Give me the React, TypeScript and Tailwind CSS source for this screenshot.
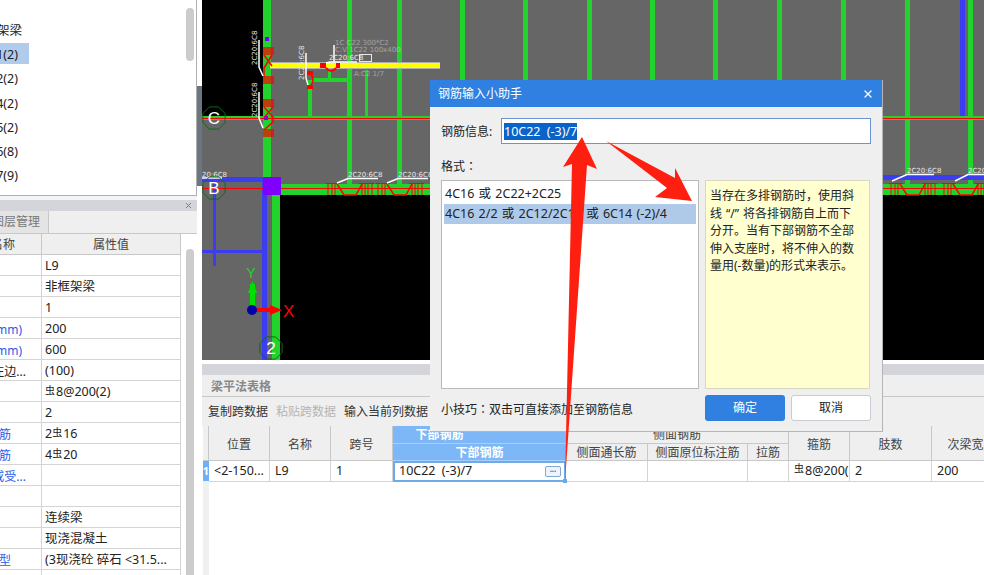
import React from 'react';
import { X } from 'lucide-react';

const TREE_ROWS = [
  { text: '非框架梁', clip: 'w-[22px]', active: false },
  { text: 'L1(2)', clip: 'w-[18px]', active: true },
  { text: 'L2(2)', clip: 'w-[18px]', active: false },
  { text: 'L4(2)', clip: 'w-[18px]', active: false },
  { text: 'L5(2)', clip: 'w-[18px]', active: false },
  { text: 'L6(8)', clip: 'w-[18px]', active: false },
  { text: 'L7(9)', clip: 'w-[18px]', active: false },
  { text: 'L8(9)', clip: 'w-[18px]', active: false },
];

const PROPS = [
  { name: '', clip: 'w-[20px]', blue: false, value: 'L9' },
  { name: '', clip: 'w-[20px]', blue: false, value: '非框架梁' },
  { name: '', clip: 'w-[20px]', blue: false, value: '1' },
  { name: '截面宽度(mm)', clip: 'w-[22px]', blue: true, value: '200' },
  { name: '截面高度(mm)', clip: 'w-[22px]', blue: true, value: '600' },
  { name: '轴线距梁左边...', clip: 'w-[26px]', blue: false, value: '(100)' },
  { name: '', clip: 'w-[20px]', blue: false, value: '@8@200(2)' },
  { name: '', clip: 'w-[20px]', blue: false, value: '2' },
  { name: '上部通长筋', clip: 'w-[11px]', blue: true, value: '2@16' },
  { name: '下部通长筋', clip: 'w-[11px]', blue: true, value: '4@20' },
  { name: '侧面构造或受...', clip: 'w-[26px]', blue: true, value: '' },
  { name: '', clip: 'w-[20px]', blue: false, value: '' },
  { name: '', clip: 'w-[20px]', blue: false, value: '连续梁' },
  { name: '', clip: 'w-[20px]', blue: false, value: '现浇混凝土' },
  { name: '混凝土类型', clip: 'w-[11px]', blue: true, value: '(3现浇砼 碎石 <31.5...' },
  { name: '', clip: 'w-[20px]', blue: false, value: '' },
];

const GREEN_COLUMNS = [347, 397, 460, 523, 587, 650, 713, 777, 841, 905, 968];
const H_MARKS = [326, 376, 889, 942];
const B_LABELS = [348, 398, 907, 968];

// rebar grade symbol, raised a little like in the app font
function Steel() {
  return <span className="relative top-[-3px] text-[10px] leading-none mr-px">虫</span>;
}

function PropValue({ value }: { value: string }) {
  if (!value.includes('@') || value[0] === '(') return <>{value}</>;
  const [before, after] = value.split('@').length === 3 ? ['', value.slice(1)] : value.split('@');
  return (
    <>
      {before}
      <Steel />
      {after}
    </>
  );
}

function HMark({ x }: { x: number }) {
  return (
    <g transform={`translate(${x} 183)`} fill="none" stroke="#ff0000">
      <path d="M0 0.500H14M2 0V12M6 0V12M9 0V12" />
      <path d="M33 0.500H48M36 0V12M39 0V12M42 0V12M46 0V12" />
      <path d="M11 1L18 12H30L36 1" strokeWidth="1.5" />
    </g>
  );
}

function VTicks({ y, count }: { y: number; count: number }) {
  return (
    <g stroke="#ff0000" strokeWidth="1.400">
      {Array.from({ length: count }, (_, i) => (
        <path key={i} d={`M263 ${y + i * 2}H274`} />
      ))}
    </g>
  );
}

function CadLabel({ x, y, rotate, children }: { x: number; y: number; rotate?: boolean; children: React.ReactNode }) {
  return (
    <text
      x={x}
      y={y}
      fontSize="7"
      fontFamily="'DejaVu Sans', sans-serif"
      fill="#e8e8e8"
      transform={rotate ? `rotate(-90 ${x} ${y})` : undefined}
    >
      {children}
    </text>
  );
}

function AxisBubble({ x, y, label }: { x: number; y: number; label: string }) {
  const pts = Array.from({ length: 8 }, (_, i) => {
    const a = (i * Math.PI) / 4 + Math.PI / 8;
    return `${x + 12 * Math.cos(a)},${y + 12 * Math.sin(a)}`;
  }).join(' ');
  return (
    <g>
      <polygon points={pts} fill="none" stroke="#0b6b16" strokeWidth="1" />
      <text x={x} y={y + 6} textAnchor="middle" fontSize="17" fontFamily="'Liberation Sans', sans-serif" fill="#ffffff">
        {label}
      </text>
    </g>
  );
}

function CadView() {
  return (
    <svg viewBox="202 0 782 360" className="block w-full h-[360px] bg-[#666666]">
      <rect x="202" y="0" width="61" height="116" fill="#000000" />
      <rect x="280" y="195" width="704" height="165" fill="#000000" />

      {GREEN_COLUMNS.map((x) => (
        <rect key={x} x={x} y="0" width="5" height="185" fill="#22d32c" />
      ))}
      <rect x="263" y="0" width="8" height="178" fill="#22d32c" />
      <rect x="271" y="178" width="9" height="182" fill="#22d32c" />
      <rect x="262" y="178" width="5" height="182" fill="#3c3cf0" />
      <rect x="960" y="0" width="5" height="116" fill="#3c3cf0" />

      <rect x="308" y="80" width="4" height="36" fill="#22d32c" />
      <rect x="312" y="78" width="35" height="4" fill="#22d32c" />
      <rect x="328" y="66" width="3" height="12" fill="#22d32c" />
      <rect x="365" y="70" width="3" height="46" fill="#22d32c" />

      <rect x="202" y="116" width="782" height="4" fill="#22d32c" />
      <rect x="202" y="118" width="782" height="1" fill="#ff0000" />
      <rect x="263" y="184" width="721" height="11" fill="#22d32c" />
      <rect x="202" y="177" width="62" height="5" fill="#3c3cf0" />
      <rect x="883" y="175" width="101" height="5" fill="#3c3cf0" />
      <rect x="213" y="182" width="3" height="84" fill="#3c3cf0" />
      <rect x="202" y="250" width="61" height="3" fill="#3c3cf0" />
      <rect x="202" y="188" width="782" height="1" fill="#ff0000" />
      <rect x="271" y="0" width="1" height="360" fill="#e03020" />
      <rect x="263" y="177" width="18" height="18" fill="#8000ff" />
      <rect x="265" y="37" width="4" height="4" fill="#8000ff" />
      <rect x="264" y="116" width="4" height="4" fill="#8000ff" />

      <rect x="270" y="62" width="170" height="7" fill="#aeaeae" />
      <rect x="270" y="63" width="170" height="5" fill="#ffff00" />

      {H_MARKS.map((x) => (
        <HMark key={x} x={x} />
      ))}
      <VTicks y={48} count={4} />
      <VTicks y={77} count={4} />
      <VTicks y={100} count={4} />
      <VTicks y={130} count={4} />
      <g fill="none" stroke="#ff0000" strokeWidth="1.500">
        <path d="M272 55L264 68V77M264 55L272 66" />
        <path d="M264 107L273 117V122L264 130M273 107L264 118" />
        <path d="M311 74Q315 80 311 85" strokeWidth="1.500" />
      </g>
      <rect x="307" y="71" width="6" height="4" fill="#ff0000" />
      <rect x="307" y="85" width="6" height="4" fill="#ff0000" />
      <rect x="320" y="63" width="6" height="5" fill="#ff0000" />
      <rect x="336" y="63" width="4" height="5" fill="#ff0000" />
      <path d="M326 68Q331 74 336 68" fill="none" stroke="#ff0000" strokeWidth="2" />

      <g fill="none" stroke="#ffffff" strokeWidth="1.500">
        <path d="M259 40V67L263 76" />
        <path d="M259 92V118L263 128" />
        <path d="M306 53V78L308 85" />
        <path d="M334 45V62" />
        <path d="M326 63L330 62H357" />
        <path d="M337 183L348 178.500H378" />
        <path d="M387 183L398 178.500H428" />
        <path d="M892 181L907 174.500H934" />
        <path d="M955 181L968 174.500H984" />
        <path d="M202 178H222" />
      </g>
      <rect x="359.500" y="54.500" width="12" height="7" fill="none" stroke="#e8e8e8" />

      <CadLabel x={257} y={65} rotate>2C20:6C8</CadLabel>
      <CadLabel x={257} y={117} rotate>2C20:6C8</CadLabel>
      <CadLabel x={304} y={80} rotate>2C20:6C8</CadLabel>
      <CadLabel x={329} y={60}>2C20:6C8</CadLabel>
      {B_LABELS.map((x) => (
        <CadLabel key={x} x={x} y={x > 800 ? 173 : 177}>2C20:6C8</CadLabel>
      ))}
      <CadLabel x={202} y={177}>20:6C8</CadLabel>
      <g opacity="0.45">
        <CadLabel x={335} y={45}>1C C22 300*C2</CadLabel>
        <CadLabel x={335} y={52}>C:V 1C22 100x400</CadLabel>
        <CadLabel x={354} y={76}>A:C2 1/7</CadLabel>
      </g>

      <AxisBubble x={214} y={118} label="C" />
      <AxisBubble x={214} y={188} label="B" />
      <AxisBubble x={271} y={348} label="2" />

      <rect x="250" y="284" width="5" height="24" fill="#00e000" />
      <polygon points="252.500,281 248,293 257,293" fill="#00e000" />
      <rect x="256" y="308" width="18" height="4" fill="#ff0000" />
      <polygon points="282,310 270,305 270,315" fill="#ff0000" />
      <circle cx="252" cy="310" r="5" fill="#0000a8" />
      <text x="251" y="278" textAnchor="middle" fontSize="14" fontFamily="'Liberation Sans', sans-serif" fill="#22d32c">Y</text>
      <text x="283" y="317" fontSize="17" fontFamily="'Liberation Sans', sans-serif" fill="#ff0000">X</text>
    </svg>
  );
}

function HelperDialog() {
  return (
    <div className="absolute left-[430px] top-[80px] w-[453px] h-[352px] bg-[#efefef] border-r border-b border-[#b5b5b5] flex flex-col text-[#222222]">
      <div className="h-[27px] bg-[#2f80e0] text-white text-[12px] flex items-center justify-between pl-2 pr-[8px]">
        <span>钢筋输入小助手</span>
        <X size={12} strokeWidth={2.5} />
      </div>
      <div className="flex items-center mt-[11px] pl-[11px] h-[26px]">
        <span className="w-[60px] text-[12px] pt-px">钢筋信息:</span>
        <div className="w-[370px] h-[26px] bg-white border border-[#6a93d8] flex items-center pl-[2px]">
          <span className="bg-[#0a63c8] text-white text-[12.5px] leading-[17px] [word-spacing:3px]">10C22 (-3)/7</span>
        </div>
      </div>
      <div className="mt-[12px] pl-[11px] text-[12px] h-[20px] leading-[20px]">
        格式<span className="font-['Noto_Sans_CJK_TC']">：</span>
      </div>
      <div className="mt-[4px] pl-[11px] flex gap-[6px]">
        <div className="w-[258px] h-[209px] bg-white border border-[#b9b9b9] pt-[2px] px-px text-[12.5px] [word-spacing:1px]">
          <div className="h-[21px] pl-[2px] leading-[21px]">4C16 或 2C22+2C25</div>
          <div className="h-[20px] mx-px pl-px bg-[#afc9e9] leading-[20px] whitespace-nowrap">4C16 2/2 或 2C12/2C14 或 6C14 (-2)/4</div>
        </div>
        <div className="w-[165px] h-[209px] bg-[#ffffcf] border border-[#d8d8c0] pt-[6px] pl-[4px] text-[12px] leading-[17.500px] whitespace-nowrap">
          <div>当存在多排钢筋时，使用斜</div>
          <div>
            线<span className="px-[4px]">“/”</span>将各排钢筋自上而下
          </div>
          <div>分开。当有下部钢筋不全部</div>
          <div>伸入支座时，将不伸入的数</div>
          <div>量用(-数量)的形式来表示。</div>
        </div>
      </div>
      <div className="mt-[6px] pl-[11px] pr-[11px] flex items-center justify-between">
        <span className="text-[12px] pt-[2px]">
          小技巧<span className="font-['Noto_Sans_CJK_TC']">：</span>双击可直接添加至钢筋信息
        </span>
        <div className="flex gap-[6px] text-[12px]">
          <button className="w-[80px] h-[26px] rounded-[3px] bg-[#2f80e0] text-white">确定</button>
          <button className="w-[80px] h-[26px] rounded-[3px] bg-white border border-[#c8ccd4]">取消</button>
        </div>
      </div>
    </div>
  );
}

function AnnotationArrows() {
  return (
    <svg viewBox="0 0 984 575" className="absolute inset-0 w-[984px] h-[575px] pointer-events-none">
      <polygon points="582,137 597,169 587,165 565,482 572,164 563,167" fill="#ff1f10" />
      <polygon points="606,141 675,178 675,168 692,201 655,197 667,188" fill="#ff1f10" />
    </svg>
  );
}

function HeadCell({ className, children }: { className?: string; children?: React.ReactNode }) {
  return (
    <div className={`flex items-center justify-center bg-[#efefef] border-r border-b border-[#c8c8c8] text-[12px] text-[#444444] whitespace-nowrap overflow-hidden ${className ?? ''}`}>
      {children}
    </div>
  );
}

function ActiveHead({ className, children }: { className?: string; children?: React.ReactNode }) {
  return (
    <div className={`flex items-center justify-center bg-[#7db7f7] border-b border-[#a9cff8] text-[12px] font-bold text-white whitespace-nowrap overflow-hidden ${className ?? ''}`}>
      {children}
    </div>
  );
}

function BodyCell({ className, children }: { className?: string; children?: React.ReactNode }) {
  return (
    <div className={`flex items-center pl-[5px] bg-white border-r border-b border-[#d4d4d4] text-[12.500px] text-[#222222] whitespace-nowrap overflow-hidden ${className ?? ''}`}>
      {children}
    </div>
  );
}

function BeamTable() {
  return (
    <div className="flex-1 ml-px relative">
      <div className="absolute left-0 top-[55px] bottom-0 w-[6px] bg-[#f0f0f0]" />
      <div className="grid grid-cols-[6px_61px_61px_62px_173px_82px_100px_41px_61px_82px_80px] grid-rows-[18px_17px_21px]">
        <HeadCell className="row-span-2" />
        <HeadCell className="row-span-2 pt-[3px]">位置</HeadCell>
        <HeadCell className="row-span-2 pt-[3px]">名称</HeadCell>
        <HeadCell className="row-span-2 pt-[3px]">跨号</HeadCell>
        <ActiveHead>
          <span className="mr-[80px]">下部钢筋</span>
        </ActiveHead>
        <HeadCell className="col-span-3">侧面钢筋</HeadCell>
        <HeadCell className="row-span-2 pt-[3px]">箍筋</HeadCell>
        <HeadCell className="row-span-2 pt-[3px]">肢数</HeadCell>
        <HeadCell className="row-span-2 pt-[3px]">次梁宽度</HeadCell>
        <ActiveHead className="pt-px">下部钢筋</ActiveHead>
        <HeadCell className="pt-px">侧面通长筋</HeadCell>
        <HeadCell className="pt-px">侧面原位标注筋</HeadCell>
        <HeadCell className="pt-px">拉筋</HeadCell>

        <div className="bg-[#6eb0f5] text-white text-[11px] font-bold flex items-center justify-center border-b border-[#d4d4d4]">1</div>
        <BodyCell>&lt;2-150...</BodyCell>
        <BodyCell>L9</BodyCell>
        <BodyCell>1</BodyCell>
        <div className="relative flex items-center justify-between pl-[4px] pr-[3px] bg-white border-2 border-[#6ea9e8] text-[12.500px] text-[#222222]">
          <span className="[word-spacing:3px]">10C22 (-3)/7</span>
          <span className="w-[16px] h-[11px] rounded-[2px] border border-[#7fa8d8] bg-[#eef4fc] text-[#3b6ea8] text-[8px] leading-[7px] text-center font-bold">···</span>
          <span className="absolute right-[-3px] bottom-[-3px] w-[4px] h-[4px] bg-[#6ea9e8]" />
        </div>
        <BodyCell />
        <BodyCell />
        <BodyCell />
        <BodyCell className="pl-[4px]">
          <Steel />8@200(
        </BodyCell>
        <BodyCell>2</BodyCell>
        <BodyCell>200</BodyCell>
      </div>
    </div>
  );
}

export default function App() {
  return (
    <div className="relative w-[984px] h-[575px] overflow-hidden flex bg-white font-['Noto_Sans','Noto_Sans_CJK_SC',sans-serif]">
      <aside className="w-[197px] shrink-0 flex flex-col text-[#222222]">
        <div className="h-[196px] shrink-0 relative border-r border-b border-[#b0b0b0] overflow-hidden pt-[19px] text-[12.500px]">
          {TREE_ROWS.map((row) => (
            <div key={row.text} className="h-[24.200px] flex items-start">
              <div className={`h-[21px] w-[29px] leading-[23px] ${row.active ? 'bg-[#b0cbeb]' : ''}`}>
                <div className={`${row.clip} overflow-hidden flex justify-end whitespace-nowrap`}>{row.text}</div>
              </div>
            </div>
          ))}
          <div className="absolute left-[186px] top-[8px] w-[8px] h-[53px] rounded-[4px] bg-[#cccccc]" />
        </div>
        <div className="h-[4px] shrink-0 bg-[#f4f4f4]" />
        <div className="h-[11px] shrink-0 bg-[#d4d5da] flex justify-end items-center pr-[4px] text-[#777777]">
          <X size={9} strokeWidth={2.5} />
        </div>
        <div className="h-[23px] shrink-0 bg-[#efefef] border-b border-[#c8c8c8] flex">
          <div className="w-[49px] bg-[#e4e4e4] border-r border-[#c8c8c8] overflow-hidden flex justify-end items-center pr-[8px] whitespace-nowrap text-[12px] text-[#777777]">
            图层管理
          </div>
        </div>
        <div className="flex-1 flex min-h-0">
          <div className="w-[181px] shrink-0 overflow-hidden">
            <div className="grid grid-cols-[42px_139px] h-[21px]">
              <div className="bg-[#efefef] border-r border-b border-[#c8c8c8] overflow-hidden flex items-center text-[12px] text-[#444444] pt-[2px]">
                <div className="w-[15px] overflow-hidden flex justify-end whitespace-nowrap">名称</div>
              </div>
              <div className="bg-[#efefef] border-r border-b border-[#c8c8c8] flex items-center justify-center text-[12px] text-[#444444] pt-[2px]">属性值</div>
            </div>
            {PROPS.map((p, i) => (
              <div key={i} className="grid grid-cols-[42px_139px] h-[21px]">
                <div className={`border-r border-b border-[#d4d4d4] flex items-center text-[12px] overflow-hidden pt-[3px] ${p.blue ? 'text-[#2a5be8]' : ''}`}>
                  <div className={`${p.clip} overflow-hidden flex justify-end whitespace-nowrap`}>{p.name}</div>
                </div>
                <div className="border-r border-b border-[#d4d4d4] flex items-center pl-[3px] text-[12.500px] whitespace-nowrap overflow-hidden pt-[3px]">
                  <PropValue value={p.value} />
                </div>
              </div>
            ))}
          </div>
          <div className="flex-1 relative">
            <div className="absolute left-[5px] top-[15px] bottom-0 w-[8px] rounded-t-[4px] bg-[#cccccc]" />
          </div>
        </div>
      </aside>

      <div className="w-[5px] shrink-0 pt-[86px]">
        <div className="h-[100px] bg-[#6b7680]" />
      </div>

      <main className="flex-1 min-w-0 flex flex-col">
        <CadView />
        <div className="h-[4px] shrink-0 bg-white" />
        <div className="h-[11px] shrink-0 bg-[#d4d5da]" />
        <div className="h-[22px] shrink-0 bg-[#efefef] border-b border-[#c8c8c8] flex items-center pl-[9px] pt-[2px] text-[12px] font-bold text-[#888888]">
          梁平法表格
        </div>
        <div className="h-[29px] shrink-0 bg-[#efefef] flex items-center pl-[6px] pt-px gap-[8px] text-[12px] text-[#333333]">
          <span>复制跨数据</span>
          <span className="text-[#b5b5b5]">粘贴跨数据</span>
          <span>输入当前列数据</span>
        </div>
        <BeamTable />
      </main>

      <HelperDialog />
      <AnnotationArrows />
    </div>
  );
}
